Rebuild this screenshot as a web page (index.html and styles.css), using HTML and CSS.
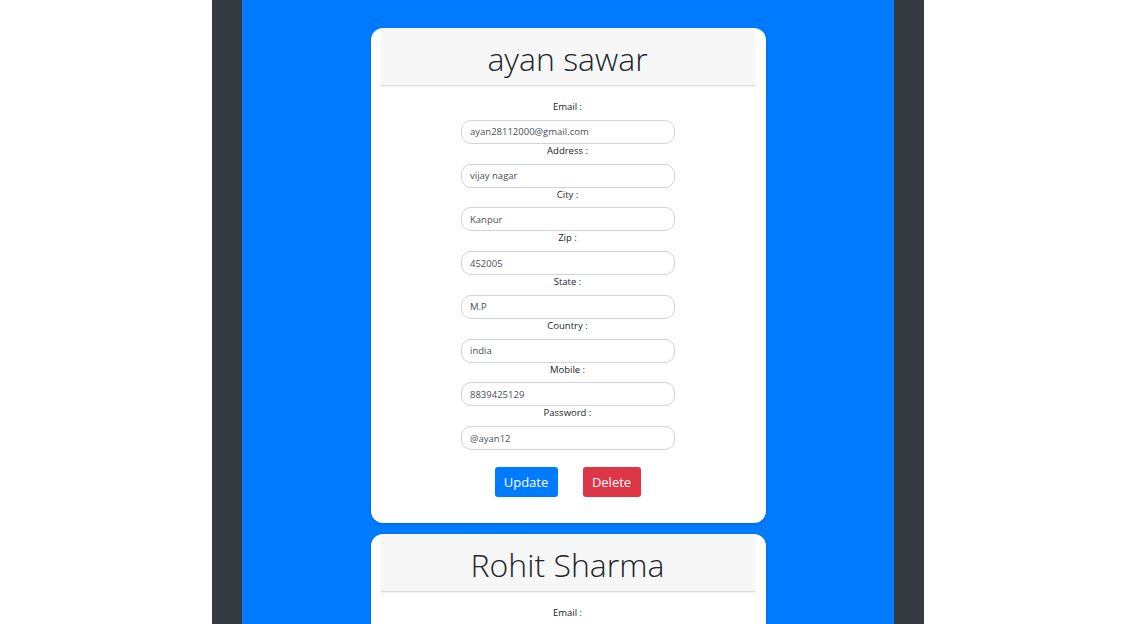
FILE: index.html
```html
<!DOCTYPE html>
<html>
<head>
<meta charset="utf-8">
<link rel="stylesheet" href="styles.css">
</head>
<body>
<div class="page">
  <div class="panel">
    <div class="card">
      <div class="card-header"><h2>ayan sawar</h2></div>
      <div class="card-body">
        <label>Email :</label>
        <input class="field" value="ayan28112000@gmail.com">
        <label>Address :</label>
        <input class="field" value="vijay nagar">
        <label>City :</label>
        <input class="field" value="Kanpur">
        <label>Zip :</label>
        <input class="field" value="452005">
        <label>State :</label>
        <input class="field" value="M.P">
        <label>Country :</label>
        <input class="field" value="india">
        <label>Mobile :</label>
        <input class="field" value="8839425129">
        <label>Password :</label>
        <input class="field" value="@ayan12">
        <div class="actions">
          <button class="btn btn-blue">Update</button>
          <button class="btn btn-red">Delete</button>
        </div>
      </div>
    </div>
    <div class="card">
      <div class="card-header"><h2>Rohit Sharma</h2></div>
      <div class="card-body">
        <label>Email :</label>
      </div>
    </div>
  </div>
</div>
</body>
</html>
```
FILE: styles.css
```css
html, body {
  margin: 0;
  padding: 0;
  height: 100%;
  overflow: hidden;
  background: #fff;
}
body {
  padding-left: 8px;
  font-family: "Open Sans", "Noto Sans", sans-serif;
  color: #212529;
}
.page {
  width: 712px;
  margin: 0 auto;
  background: #343a40;
  padding: 0 30px;
  box-sizing: border-box;
  min-height: 100%;
}
.panel {
  background: #007bff;
  padding-top: 28px;
  min-height: 624px;
  display: flex;
  flex-direction: column;
  align-items: center;
  gap: 11px;
}
.card {
  width: 395px;
  box-sizing: border-box;
  background: #fff;
  border-radius: 12px;
  padding: 1px 11px 26px 10px;
  box-shadow: 0 1px 3px rgba(0,0,0,0.2);
  flex-shrink: 0;
}
.card-header {
  background: #f7f7f7;
  height: 57px;
  box-sizing: border-box;
  border-bottom: 1px solid #dcdcdc;
  box-shadow: 0 1px 1px rgba(0,0,0,0.05);
  display: flex;
  align-items: center;
  justify-content: center;
}
.card-header h2 {
  margin: 0;
  font-weight: 300;
  font-size: 32px;
  line-height: 40px;
  color: #212529;
  padding-top: 4px;
}
.card-body {
  padding-top: 14px;
  display: flex;
  flex-direction: column;
  align-items: center;
}
label {
  display: block;
  font-size: 9.5px;
  line-height: 12.75px;
  padding-top: 1px;
  margin-bottom: 6px;
  color: #212529;
}
.field {
  width: 214px;
  height: 24px;
  box-sizing: border-box;
  border: 1px solid #ced4da;
  border-radius: 10px;
  padding: 0 8px;
  font-family: "Open Sans", "Noto Sans", sans-serif;
  font-size: 9.5px;
  color: #495057;
  background: #fff;
  margin: 0;
  margin-left: 1px;
}
.actions {
  display: flex;
  gap: 25px;
  margin-top: 17px;
}
.btn {
  height: 30px;
  border: none;
  border-radius: 3px;
  color: #fff;
  font-family: "Open Sans", "Noto Sans", sans-serif;
  font-size: 13px;
  padding: 0 8px;
}
.btn-blue { background: #007bff; width: 63px; }
.btn-red { background: #dc3545; width: 58px; }
```
